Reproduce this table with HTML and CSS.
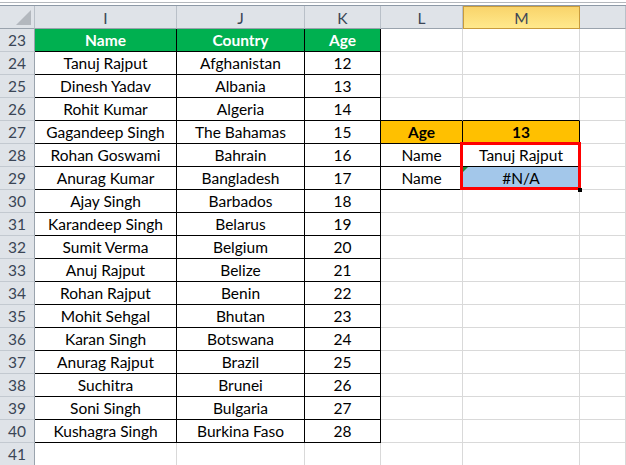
FILE: index.html
```html
<!DOCTYPE html>
<html>
<head>
<meta charset="utf-8">
<link rel="stylesheet" href="styles.css">
</head>
<body>
<div class="topbar"></div>
<div class="wrap">
<div class="sheet">
  <div class="ch corner"><span class="tri"></span></div><div class="ch">I</div><div class="ch">J</div><div class="ch">K</div><div class="ch">L</div><div class="ch sel">M</div><div class="ch"></div>

  <div class="rh">23</div><div class="c hd b">Name</div><div class="c hd b">Country</div><div class="c hd b">Age</div><div class="c"></div><div class="c"></div><div class="c"></div>
  <div class="rh">24</div><div class="c b">Tanuj Rajput</div><div class="c b">Afghanistan</div><div class="c b">12</div><div class="c"></div><div class="c"></div><div class="c"></div>
  <div class="rh">25</div><div class="c b">Dinesh Yadav</div><div class="c b">Albania</div><div class="c b">13</div><div class="c"></div><div class="c"></div><div class="c"></div>
  <div class="rh">26</div><div class="c b">Rohit Kumar</div><div class="c b">Algeria</div><div class="c b">14</div><div class="c bb"></div><div class="c bb"></div><div class="c"></div>
  <div class="rh">27</div><div class="c b">Gagandeep Singh</div><div class="c b">The Bahamas</div><div class="c b">15</div><div class="c b org">Age</div><div class="c b org">13</div><div class="c"></div>
  <div class="rh">28</div><div class="c b">Rohan Goswami</div><div class="c b">Bahrain</div><div class="c b">16</div><div class="c b">Name</div><div class="c b">Tanuj Rajput</div><div class="c"></div>
  <div class="rh">29</div><div class="c b">Anurag Kumar</div><div class="c b">Bangladesh</div><div class="c b">17</div><div class="c b">Name</div><div class="c b na"><span class="err"></span>#N/A</div><div class="c"></div>
  <div class="rh">30</div><div class="c b">Ajay Singh</div><div class="c b">Barbados</div><div class="c b">18</div><div class="c"></div><div class="c"></div><div class="c"></div>
  <div class="rh">31</div><div class="c b">Karandeep Singh</div><div class="c b">Belarus</div><div class="c b">19</div><div class="c"></div><div class="c"></div><div class="c"></div>
  <div class="rh">32</div><div class="c b">Sumit Verma</div><div class="c b">Belgium</div><div class="c b">20</div><div class="c"></div><div class="c"></div><div class="c"></div>
  <div class="rh">33</div><div class="c b">Anuj Rajput</div><div class="c b">Belize</div><div class="c b">21</div><div class="c"></div><div class="c"></div><div class="c"></div>
  <div class="rh">34</div><div class="c b">Rohan Rajput</div><div class="c b">Benin</div><div class="c b">22</div><div class="c"></div><div class="c"></div><div class="c"></div>
  <div class="rh">35</div><div class="c b">Mohit Sehgal</div><div class="c b">Bhutan</div><div class="c b">23</div><div class="c"></div><div class="c"></div><div class="c"></div>
  <div class="rh">36</div><div class="c b">Karan Singh</div><div class="c b">Botswana</div><div class="c b">24</div><div class="c"></div><div class="c"></div><div class="c"></div>
  <div class="rh">37</div><div class="c b">Anurag Rajput</div><div class="c b">Brazil</div><div class="c b">25</div><div class="c"></div><div class="c"></div><div class="c"></div>
  <div class="rh">38</div><div class="c b">Suchitra</div><div class="c b">Brunei</div><div class="c b">26</div><div class="c"></div><div class="c"></div><div class="c"></div>
  <div class="rh">39</div><div class="c b">Soni Singh</div><div class="c b">Bulgaria</div><div class="c b">27</div><div class="c"></div><div class="c"></div><div class="c"></div>
  <div class="rh">40</div><div class="c b">Kushagra Singh</div><div class="c b">Burkina Faso</div><div class="c b">28</div><div class="c"></div><div class="c"></div><div class="c"></div>
  <div class="rh">41</div><div class="c"></div><div class="c"></div><div class="c"></div><div class="c"></div><div class="c"></div><div class="c"></div>
</div>
<div class="redbox"></div>
<div class="handle"></div>
</div>
</body>
</html>
```

FILE: styles.css
```css
html, body {
  margin: 0;
  padding: 0;
  background: #ffffff;
  overflow: hidden;
}
body {
  font-family: Lato, "Open Sans", sans-serif;
  font-size: 15.5px;
  color: #000;
}
.topbar {
  height: 5px;
  box-sizing: border-box;
  border-top: 2px solid #ffffff;
  position: relative;
  background: #fff;
}
.topbar::before {
  content: "";
  display: block;
  height: 1px;
  background: #b4b8bd;
}
.wrap {
  position: relative;
  border-top: 1px solid #8e9aa7;
}
.sheet {
  display: grid;
  grid-template-columns: 35px 142px 128px 76px 82px 117px 46px;
  grid-auto-rows: 23px;
}
.sheet > div {
  box-sizing: border-box;
  border-right: 1px solid #d9d9d9;
  border-bottom: 1px solid #d9d9d9;
  display: flex;
  align-items: center;
  justify-content: center;
  white-space: nowrap;
  overflow: hidden;
  position: relative;
}
.ch {
  background: #dfe3e8;
  color: #3b4656;
  border-right-color: #b9c0c8 !important;
  border-bottom-color: #9aa3ad !important;
  padding-top: 1px;
}
.ch.sel {
  background: linear-gradient(#f9d46b, #ffe98c);
  border: 1px solid #c89b3c !important;
  border-left: 0;
}
.corner {
  justify-content: flex-end !important;
  align-items: flex-end !important;
}
.tri {
  width: 0;
  height: 0;
  border-style: solid;
  border-width: 0 0 15px 15px;
  border-color: transparent transparent #b3b8be transparent;
  margin: 0 3px 3px 0;
}
.rh {
  background: #dfe3e8;
  color: #3b4656;
  border-right-color: #9aa3ad !important;
  border-bottom-color: #c3c9d0 !important;
}
.sheet > .b {
  border-right-color: #000;
  border-bottom-color: #000;
}
.sheet > .bb {
  border-bottom-color: #000;
}
.hd {
  background: #00b050;
  color: #fff;
  font-weight: bold;
}
.org {
  background: #ffc000;
  font-weight: bold;
}
.na {
  background: #a3c7ea;
}
.err {
  position: absolute;
  left: 0;
  top: 0;
  width: 0;
  height: 0;
  border-style: solid;
  border-width: 5px 5px 0 0;
  border-color: #1e8c3a transparent transparent transparent;
}
.redbox {
  position: absolute;
  left: 460px;
  top: 136px;
  width: 121px;
  height: 48px;
  box-sizing: border-box;
  border: 3px solid #ff0000;
}
.handle {
  position: absolute;
  left: 578px;
  top: 182px;
  width: 4px;
  height: 4px;
  background: #000;
}
```
